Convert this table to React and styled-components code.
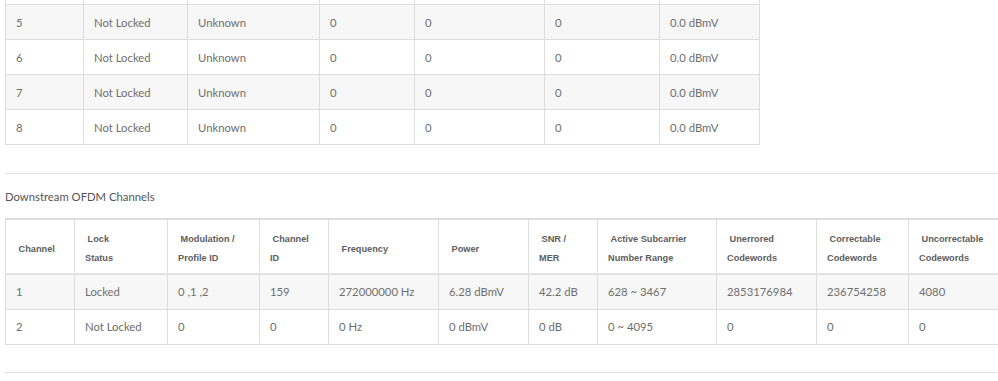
import React from 'react'
import styled, { createGlobalStyle } from 'styled-components'

const GlobalStyle = createGlobalStyle`
    html, body {
        margin: 0;
        padding: 0;
        background: #ffffff;
        overflow: hidden;
    }
`

const Page = styled.div`
    width: 998px;
    height: 381px;
    overflow: hidden;
    padding-left: 5px;
    box-sizing: border-box;
    font-family: Lato, "Open Sans", sans-serif;
    color: #666;
`

const Scrolled = styled.div`
    margin-top: -31px;
`

const Table = styled.table`
    border-collapse: collapse;
    table-layout: fixed;
    width: ${props => props.$width}px;
    margin-top: ${props => props.$top || 0}px;
    border-top: ${props => props.$thickTop ? '2px solid #dcdcdc' : 'none'};
`

const Row = styled.tr`
    height: 35px;
    background: ${props => props.$shaded ? '#f7f7f7' : '#ffffff'};
`

const Cell = styled.td`
    border: 1px solid #dddddd;
    padding: 0 10px;
    font-size: 11.3px;
    font-weight: 400;
    color: #6e6e6e;
    white-space: nowrap;
    overflow: hidden;
    vertical-align: middle;
`

const HeadRow = styled.tr`
    background: #ffffff;
`

const HeadCell = styled.th`
    border: 1px solid #dddddd;
    border-top: none;
    border-bottom: 2px solid #e2e2e2;
    padding: 10px 10px 5px 10px;
    font-family: "Liberation Sans", Arial, sans-serif;
    font-size: 9.2px;
    font-weight: 700;
    line-height: 19px;
    color: #5e5e5e;
    text-align: left;
    vertical-align: middle;
    white-space: nowrap;
`

const Rule = styled.hr`
    border: none;
    border-top: 1px solid #e2e2e2;
    margin: ${props => props.$top}px 0 0 0;
    width: 100%;
`

const Title = styled.div`
    margin-top: 16px;
    height: 14px;
    line-height: 14px;
    font-size: 11.3px;
    color: #555;
`

const upstreamCols = [78, 104, 132, 95, 130, 115, 100]
const ofdmCols = [69, 93, 92, 69, 110, 90, 69, 119, 100, 92, 100]

const upstream = [
    ['', '', '', '', '', '', ''],
    ['5', 'Not Locked', 'Unknown', '0', '0', '0', '0.0 dBmV'],
    ['6', 'Not Locked', 'Unknown', '0', '0', '0', '0.0 dBmV'],
    ['7', 'Not Locked', 'Unknown', '0', '0', '0', '0.0 dBmV'],
    ['8', 'Not Locked', 'Unknown', '0', '0', '0', '0.0 dBmV'],
]

const ofdmHeads = [
    ['Channel'],
    ['Lock', 'Status'],
    ['Modulation /', 'Profile ID'],
    ['Channel', 'ID'],
    ['Frequency'],
    ['Power'],
    ['SNR /', 'MER'],
    ['Active Subcarrier', 'Number Range'],
    ['Unerrored', 'Codewords'],
    ['Correctable', 'Codewords'],
    ['Uncorrectable', 'Codewords'],
]

const ofdm = [
    ['1', 'Locked', '0 ,1 ,2', '159', '272000000 Hz', '6.28 dBmV', '42.2 dB', '628 ~ 3467', '2853176984', '236754258', '4080'],
    ['2', 'Not Locked', '0', '0', '0 Hz', '0 dBmV', '0 dB', '0 ~ 4095', '0', '0', '0'],
]

function Cols({ widths }) {
    return (
        <colgroup>
            {widths.map((w, i) => <col key={i} style={{ width: w }} />)}
        </colgroup>
    )
}

export default function App() {
    return (
        <Page>
            <GlobalStyle />
            {/* page is scrolled: row 4 sits just above the top edge */}
            <Scrolled>
                <Table $width={754}>
                    <Cols widths={upstreamCols} />
                    <tbody>
                        {upstream.map((row, i) => (
                            <Row key={i} $shaded={i % 2 === 1}>
                                {row.map((v, j) => <Cell key={j}>{v}</Cell>)}
                            </Row>
                        ))}
                    </tbody>
                </Table>
            </Scrolled>

            <Rule $top={28} />
            <Title>Downstream OFDM Channels</Title>

            <Table $width={998} $thickTop $top={14}>
                <Cols widths={ofdmCols} />
                <thead>
                    <HeadRow>
                        {ofdmHeads.map((lines, i) => (
                            <HeadCell key={i}>
                                {'\u00a0' + lines[0]}
                                {lines[1] && <><br />{lines[1]}</>}
                            </HeadCell>
                        ))}
                    </HeadRow>
                </thead>
                <tbody>
                    {ofdm.map((row, i) => (
                        <Row key={row[0]} $shaded={i === 0}>
                            {row.map((v, j) => <Cell key={j}>{v}</Cell>)}
                        </Row>
                    ))}
                </tbody>
            </Table>

            <Rule $top={27} />
        </Page>
    )
}
